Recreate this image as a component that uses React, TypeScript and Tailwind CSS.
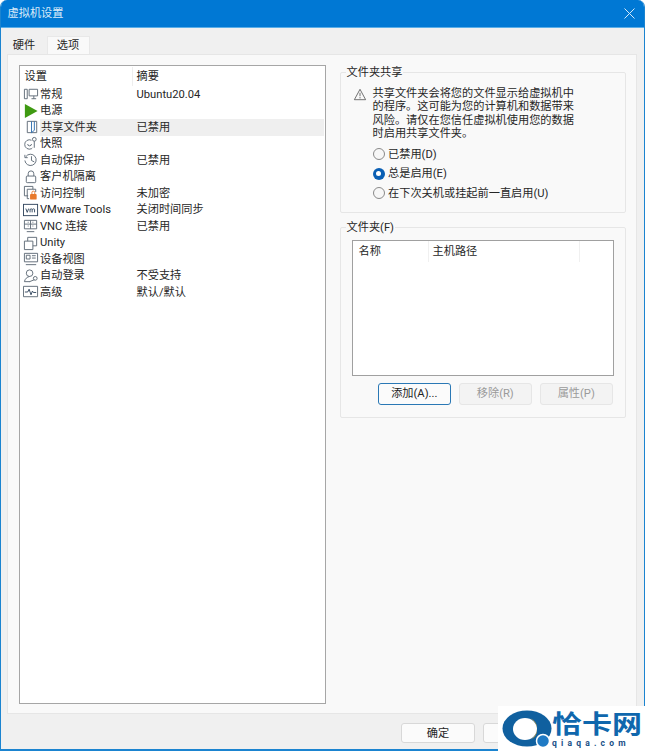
import React from "react";

const font = { fontFamily: 'Roboto,"Noto Sans CJK SC",sans-serif' };

const s = { fill: "none", stroke: "#5f6b76", strokeWidth: 1 };

const icons: Record<string, React.ReactNode> = {
  general: (<g {...s}><path d="M1.5 3.5h3v10h-3z" /><path d="M6.5 3.5h9v7h-9z" /><path d="M9 13.5h5M11.5 10.5v3" /></g>),
  power: (<path d="M2 1 15.5 8.5 2 16z" fill="#3f9a12" />),
  share: (<g {...s}><path d="M3.5 2.5h10v12h-10z" /><path d="M8 2.5v12l3-2.5V2.5" stroke="#2f6fb0" /></g>),
  snap: (<g {...s}><path d="M9 4.5a5 5 0 1 0 0 9 5 5 0 0 0 1-1" /><path d="M5 8.5a2 2 0 0 0 4 0" /><circle cx="12" cy="3.5" r="2" /><path d="M12 5.5v7" /></g>),
  clock: (<g {...s}><path d="M3 5a6 6 0 1 1-1 4" /><path d="M9 4.5V9l3 1.5" /><path d="M2 3v3h3" /></g>),
  lock: (<g {...s}><rect x="3.5" y="7.5" width="10" height="7" rx="1" /><path d="M5.5 7.5V5a3 3 0 0 1 6 0v2.5" /></g>),
  access: (<g><path d="M1.5 1.5h9v3M1.5 1.5v10h4" {...s} /><path d="M4.5 4.5h9v3M4.5 4.5v10h2" {...s} /><rect x="7.5" y="9.5" width="7" height="6" rx="1" fill="#e8792b" /><path d="M9.5 9.5V8a1.5 1.5 0 0 1 3 0v1.5" fill="none" stroke="#e8792b" /></g>),
  vm: (<g><rect x="0.5" y="2.5" width="15" height="12" fill="none" stroke="#33475f" /><path d="M3 7l1.5 4L6 7M7.5 11V7.5M7.5 8c1-1 2-1 2.2 0v3M9.8 8c1-1 2.4-1 2.5 0v3" fill="none" stroke="#33475f" strokeWidth="1" /></g>),
  vnc: (<g {...s}><path d="M1.5 2.5h13v9h-13z" /><path d="M1.5 6.5h13M5.5 4v1M10.5 4v1M5 8.5h1M8 2.5v9M10 8.5h1" /><path d="M4 14.5h8" /></g>),
  unity: (<g {...s}><path d="M1.5 6.5h9v9h-9z" /><path d="M5 6.5V2.5h9.5v9h-4" /></g>),
  device: (<g {...s}><path d="M1.5 2.5h14v9h-14z" /><path d="M3.5 4.5h4v4h-4z" /><path d="M9.5 5h4M9.5 7.5h4M3 14.5h11" /></g>),
  login: (<g {...s}><circle cx="7" cy="5.5" r="3.5" /><path d="M1.5 14.5c.5-3 3-5 5.5-5.5M7 14.5l5-2" /><circle cx="13" cy="11" r="2" /><path d="M1.5 14.5h6" /></g>),
  advanced: (<g {...s}><path d="M0.5 2.5h15v11h-15z" /><path d="M2 8.5h3l1.5-3 2 6 1.5-4 1 1.5h3" stroke="#33475f" /></g>),
};

const rows: [string, string, string, boolean?][] = [
  ["general", "常规", "Ubuntu20.04"],
  ["power", "电源", ""],
  ["share", "共享文件夹", "已禁用", true],
  ["snap", "快照", ""],
  ["clock", "自动保护", "已禁用"],
  ["lock", "客户机隔离", ""],
  ["access", "访问控制", "未加密"],
  ["vm", "VMware Tools", "关闭时间同步"],
  ["vnc", "VNC 连接", "已禁用"],
  ["unity", "Unity", ""],
  ["device", "设备视图", ""],
  ["login", "自动登录", "不受支持"],
  ["advanced", "高级", "默认/默认"],
];

function Radio({ on, label }: { on?: boolean; label: string }) {
  return (
    <div className="flex items-center h-[19.5px]">
      {on ? (
        <span className="w-[12px] h-[12px] rounded-full bg-[#0a5fb4] flex items-center justify-center shrink-0">
          <span className="w-[5px] h-[5px] rounded-full bg-white" />
        </span>
      ) : (
        <span className="w-[12px] h-[12px] rounded-full border border-[#8a8a8a] bg-[#f7f7f7] shrink-0" />
      )}
      <span className="ml-[3.5px] pt-[2px]">{label}</span>
    </div>
  );
}

function Btn({ label, kind }: { label: string; kind: "primary" | "disabled" }) {
  const cls =
    kind === "primary"
      ? "border-[#2a78b5] bg-[#fbfbfb] text-[#222]"
      : "border-[#e6e6e6] bg-[#f3f3f3] text-[#9a9a9a]";
  return (
    <div className={`w-[73.5px] h-[22px] pt-[2px] border rounded-[3px] flex items-center justify-center ${cls}`}>
      {label}
    </div>
  );
}

function Group({ title, className, children }: { title: string; className: string; children: React.ReactNode }) {
  return (
    <div className={`relative border border-[#e6e6e6] rounded-[2px] ${className}`}>
      <span className="absolute left-[5px] top-[-7px] px-[1px] bg-[#f9f9f9] leading-[14px]">{title}</span>
      {children}
    </div>
  );
}

export default function App() {
  return (
    <div className="w-[645px] h-[751px] overflow-hidden relative bg-white">
      <div
        className="w-[645px] h-[751px] overflow-hidden relative bg-[#f0f0f0] flex flex-col text-[11.2px] text-[#262626] border-x-[1.5px] border-b-[2px] border-[#1b84d0] rounded-t-[7px]"
        style={font}
      >
        <div className="h-[28px] shrink-0 bg-[#0078d4] text-white flex items-center justify-between pl-[7px] pr-[11px] mx-[-2px] border-b border-[#5aaee8]">
          <span className="text-[#dcecf9] pl-[1.5px] pt-[2px]">虚拟机设置</span>
          <svg width="11" height="11" viewBox="0 0 11 11" fill="none" stroke="#d5e9f8" strokeWidth="1">
            <path d="M0.5 0.5l10 10M10.5 0.5l-10 10" />
          </svg>
        </div>

        <div className="h-[26px] shrink-0 flex items-end pl-[5.5px]">
          <div className="w-[34px] h-[17px] flex items-center justify-center pl-[1px] pt-[2px]">硬件</div>
          <div className="w-[43px] h-[18px] ml-[6px] pt-[2px] bg-[#f9f9f9] border border-b-0 border-[#e8e8e8] flex items-center justify-center">
            选项
          </div>
        </div>

        <div className="h-[660px] shrink-0 ml-[5.5px] w-[630px] bg-[#f9f9f9] border border-[#e6e6e6] flex pt-[10px] pl-[11px]">
          <div className="w-[307.5px] h-[639px] bg-white border border-[#a6a6a6] shrink-0 pt-[1px]">
            <div className="flex h-[19px] items-center">
              <span className="w-[113px] pl-[5px] pt-[2px] border-r border-[#eeeeee] h-full flex items-center">设置</span>
              <span className="pl-[4px] pt-[2px]">摘要</span>
            </div>
            <div>
              {rows.map(([icon, name, value, selected]) => (
                <div key={name} className={`flex items-center h-[16.5px] ${selected ? "bg-[#efefef] ml-[20px] mr-[1px]" : ""}`}>
                  <span className={`w-[17px] flex justify-center ${selected ? "ml-[-16px]" : "ml-[3px]"} shrink-0`}>
                    <svg width="16" height="16" viewBox="0 0 17 17">{icons[icon]}</svg>
                  </span>
                  <span className={`${selected ? "w-[96px]" : "w-[97px]"} pl-[0.5px] pt-[2px] whitespace-nowrap`}>{name}</span>
                  <span className="whitespace-nowrap pt-[2px]">{value}</span>
                </div>
              ))}
            </div>
          </div>

          <div className="ml-[13.5px] w-[286px] flex flex-col pt-[7px]">
            <Group title="文件夹共享" className="h-[141px] pl-[10px] pt-[12.5px]">
              <div className="flex">
                <svg width="14" height="13" viewBox="0 0 16 15" fill="none" stroke="#5c5c5c" className="mt-[2px] ml-[2px] shrink-0">
                  <path d="M8 1.5 14.5 13.5h-13z" />
                  <path d="M8 5.5v4M8 10.5v1.5" />
                </svg>
                <p className="w-[204px] ml-[6px] mt-[1px] leading-[13.5px]">
                  共享文件夹会将您的文件显示给虚拟机中的程序。这可能为您的计算机和数据带来风险。请仅在您信任虚拟机使用您的数据时启用共享文件夹。
                </p>
              </div>
              <div className="ml-[22px] mt-[4px]">
                <Radio label="已禁用(D)" />
                <Radio on label="总是启用(E)" />
                <Radio label="在下次关机或挂起前一直启用(U)" />
              </div>
            </Group>

            <Group title="文件夹(F)" className="h-[191px] mt-[14px] pl-[11px] pt-[12px]">
              <div className="w-[262.5px] h-[136px] bg-white border border-[#a0a0a0]">
                <div className="flex h-[21px] items-center">
                  <span className="w-[76px] pl-[6px] pt-[2px] h-full flex items-center border-r border-[#f0f0f0]">名称</span>
                  <span className="w-[151px] pl-[4px] pt-[2px] h-full flex items-center border-r border-[#f0f0f0]">主机路径</span>
                </div>
              </div>
              <div className="flex gap-[7.5px] mt-[6.5px] ml-[26px]">
                <Btn label="添加(A)..." kind="primary" />
                <Btn label="移除(R)" kind="disabled" />
                <Btn label="属性(P)" kind="disabled" />
              </div>
            </Group>
          </div>
        </div>

        <div className="flex-1 flex justify-end pr-[17px] pt-[9px] gap-[7px] items-start">
          <div className="w-[74px] h-[20px] pt-[2px] border border-[#d8d8d8] bg-[#fbfbfb] rounded-[3px] flex items-center justify-center mr-[1px]">确定</div>
          <div className="w-[144px] h-[20px] border border-[#d8d8d8] bg-[#fbfbfb] rounded-[3px]" />
        </div>
      </div>

      <div className="absolute right-0 bottom-0 w-[147px] h-[45px] bg-white flex items-start overflow-hidden" style={font}>
        <svg width="56" height="45" viewBox="0 0 56 45" className="shrink-0">
          <ellipse cx="29" cy="22.5" rx="24.5" ry="18" fill="#10609f" />
          <ellipse cx="27" cy="23" rx="12" ry="11" fill="#ffffff" />
          <path d="M32 12a12 11 0 0 1 7 12 12 11 0 0 1-7 10 15 13 0 0 0 0-22z" fill="#f0a419" />
          <circle cx="45" cy="35" r="6.5" fill="#1f7ac4" stroke="#ffffff" strokeWidth="1.5" />
        </svg>
        <div className="flex flex-col ml-[-2px]">
          <span className="text-[25px] leading-[27px] mt-[5px] font-bold text-[#0f67ad] whitespace-nowrap origin-left scale-x-[1.2]">恰卡网</span>
          <span className="text-[8.5px] leading-[9px] mt-[1px] font-bold text-[#174f86] tracking-[4.2px] whitespace-nowrap">qiaqa.com</span>
        </div>
      </div>
    </div>
  );
}
